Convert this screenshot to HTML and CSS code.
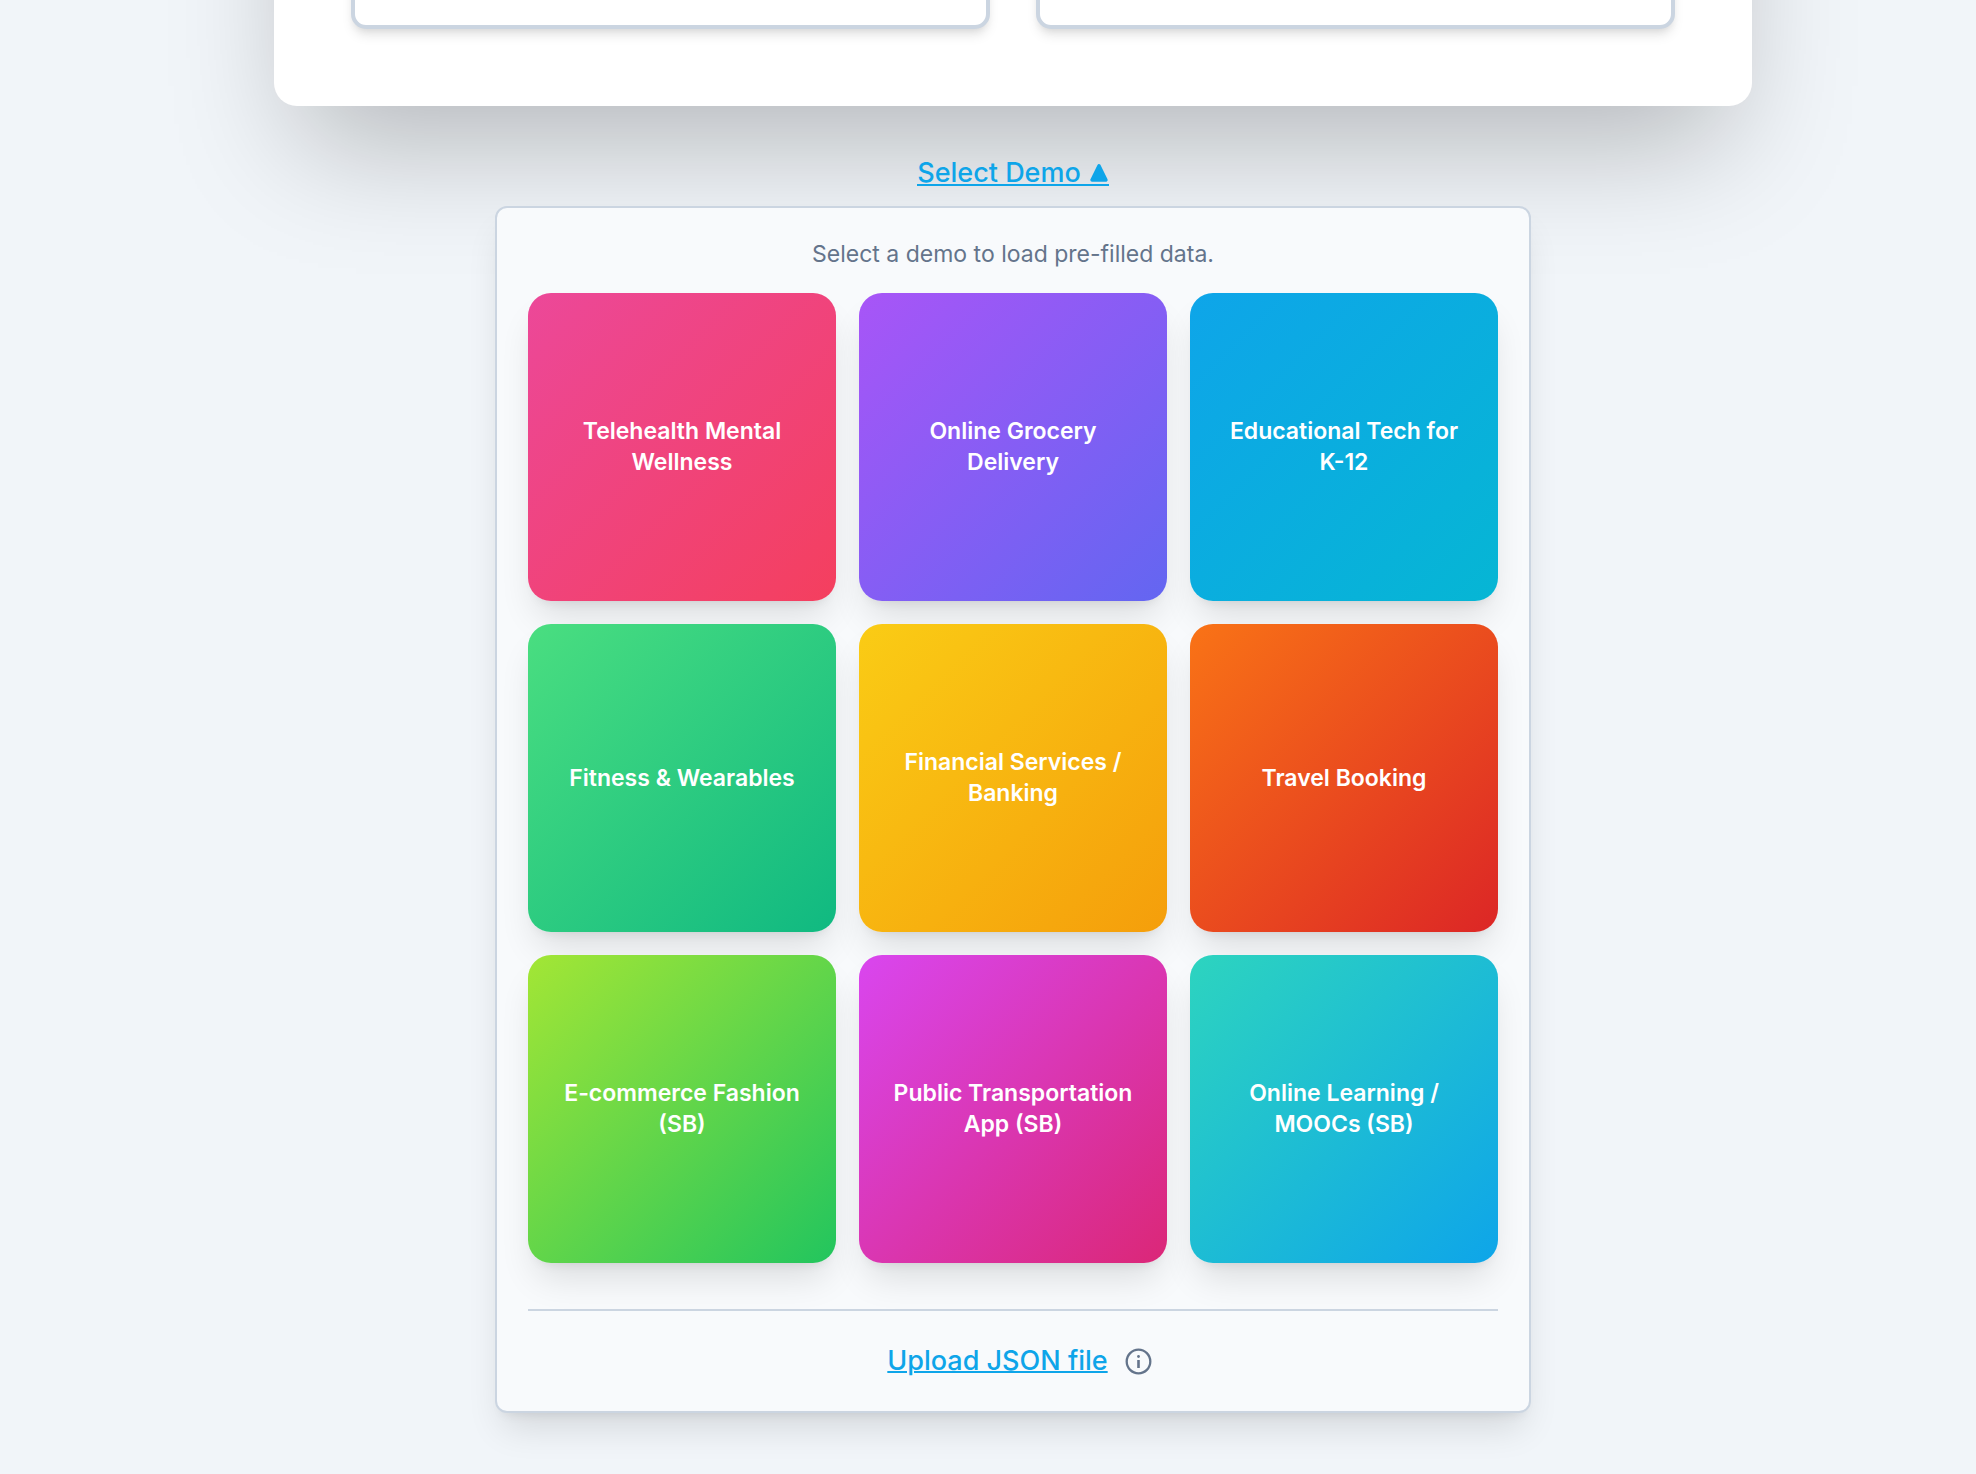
FILE: index.html
```html
<!DOCTYPE html>
<html lang="en">
<head>
<meta charset="utf-8">
<meta name="viewport" content="width=device-width, initial-scale=1">
<title>Select Demo</title>
<link rel="stylesheet" href="styles.css">
</head>
<body>
<main class="page">
  <section class="card">
    <div class="card-box"></div>
    <div class="card-box"></div>
  </section>
  <button type="button" class="link demo-toggle" aria-expanded="true">Select Demo
    <svg viewBox="0 0 20 20" width="20" height="20" aria-hidden="true">
      <path d="M10 2.8 17 17H3Z" fill="currentColor" stroke="currentColor" stroke-width="3.4" stroke-linejoin="round"/>
    </svg>
  </button>
  <section class="panel">
    <p class="hint">Select a demo to load pre-filled data.</p>
    <div class="tiles">
      <button type="button" class="tile telehealth">Telehealth Mental Wellness</button>
      <button type="button" class="tile grocery">Online Grocery Delivery</button>
      <button type="button" class="tile edtech">Educational Tech for K-12</button>
      <button type="button" class="tile fitness">Fitness &amp; Wearables</button>
      <button type="button" class="tile finance">Financial Services / Banking</button>
      <button type="button" class="tile travel">Travel Booking</button>
      <button type="button" class="tile fashion">E-commerce Fashion (SB)</button>
      <button type="button" class="tile transit">Public Transportation App (SB)</button>
      <button type="button" class="tile moocs">Online Learning / MOOCs (SB)</button>
    </div>
    <div class="upload">
      <button type="button" class="link">Upload JSON file</button>
      <button type="button" class="info" aria-label="File format information">
        <svg viewBox="0 0 31 31" width="31" height="31" aria-hidden="true">
          <circle cx="15.5" cy="15.5" r="11.8" fill="none" stroke="currentColor" stroke-width="2.3"/>
          <circle cx="15.5" cy="10.5" r="1.4" fill="currentColor"/>
          <path d="M15.5 14v8" stroke="currentColor" stroke-width="2.6"/>
        </svg>
      </button>
    </div>
  </section>
</main>
</body>
</html>
```

FILE: styles.css
```css
* { box-sizing: border-box; }

body {
  margin: 0;
  background: #f1f5f9;
  color: #64748b;
  font-family: Inter, "Liberation Sans", sans-serif;
  font-size: 23px;
  line-height: 31px;
}

button {
  margin: 0;
  padding: 0;
  border: 0;
  background: none;
  color: inherit;
  font: inherit;
  cursor: pointer;
}

.page {
  display: flex;
  flex-direction: column;
  align-items: center;
  padding: 0 0 60px 50px;
}

/* The card runs on above the top edge of the page. */
.card {
  display: grid;
  grid-template-columns: 1fr 1fr;
  gap: 46px;
  width: 100%;
  max-width: 1478px;
  margin-top: -400px;
  padding: 77px;
  border-radius: 23px;
  background: #fff;
  box-shadow: 0 62px 115px -25px rgba(0, 0, 0, 0.25);
}

.card-box {
  min-height: 352px;
  border: 4px solid #cbd5e1;
  border-radius: 15px;
  background: #fff;
  box-shadow: 0 8px 12px -2px rgba(0, 0, 0, 0.1), 0 4px 8px -4px rgba(0, 0, 0, 0.1);
}

.link {
  color: #0ea5e9;
  font-size: 27px;
  font-weight: 500;
  line-height: 38px;
  text-decoration: underline;
  text-decoration-thickness: 2px;
}

.demo-toggle {
  display: flex;
  align-items: center;
  gap: 8px;
  margin: 55px 0 20px;
  border-bottom: 2px solid;
  line-height: 23px;
  text-decoration: none;
}

.panel {
  width: 100%;
  max-width: 1036px;
  padding: 31px;
  border: 2px solid #cbd5e1;
  border-radius: 12px;
  background: #f8fafc;
}

.panel,
.tile {
  box-shadow: 0 22px 36px -8px rgba(0, 0, 0, 0.12), 0 8px 12px -8px rgba(0, 0, 0, 0.1);
}

.hint {
  margin: 0 0 23px;
  text-align: center;
}

.tiles {
  display: grid;
  grid-template-columns: repeat(3, 1fr);
  gap: 23px;
}

.tile {
  aspect-ratio: 1;
  padding: 31px;
  border-radius: 23px;
  color: #fff;
  font-weight: 600;
  text-align: center;
}

.telehealth { background: linear-gradient(to bottom right, #ec4899, #f43f5e); }
.grocery { background: linear-gradient(to bottom right, #a855f7, #6366f1); }
.edtech { background: linear-gradient(to bottom right, #0ea5e9, #06b6d4); }
.fitness { background: linear-gradient(to bottom right, #4ade80, #10b981); }
.finance { background: linear-gradient(to bottom right, #facc15, #f59e0b); }
.travel { background: linear-gradient(to bottom right, #f97316, #dc2626); }
.fashion { background: linear-gradient(to bottom right, #a3e635, #22c55e); }
.transit { background: linear-gradient(to bottom right, #d946ef, #db2777); }
.moocs { background: linear-gradient(to bottom right, #2dd4bf, #0ea5e9); }

.upload {
  display: flex;
  align-items: center;
  justify-content: center;
  gap: 15px;
  margin-top: 46px;
  padding: 31px 0 0 15px;
  border-top: 2px solid #cbd5e1;
}

.info { display: flex; }
```
